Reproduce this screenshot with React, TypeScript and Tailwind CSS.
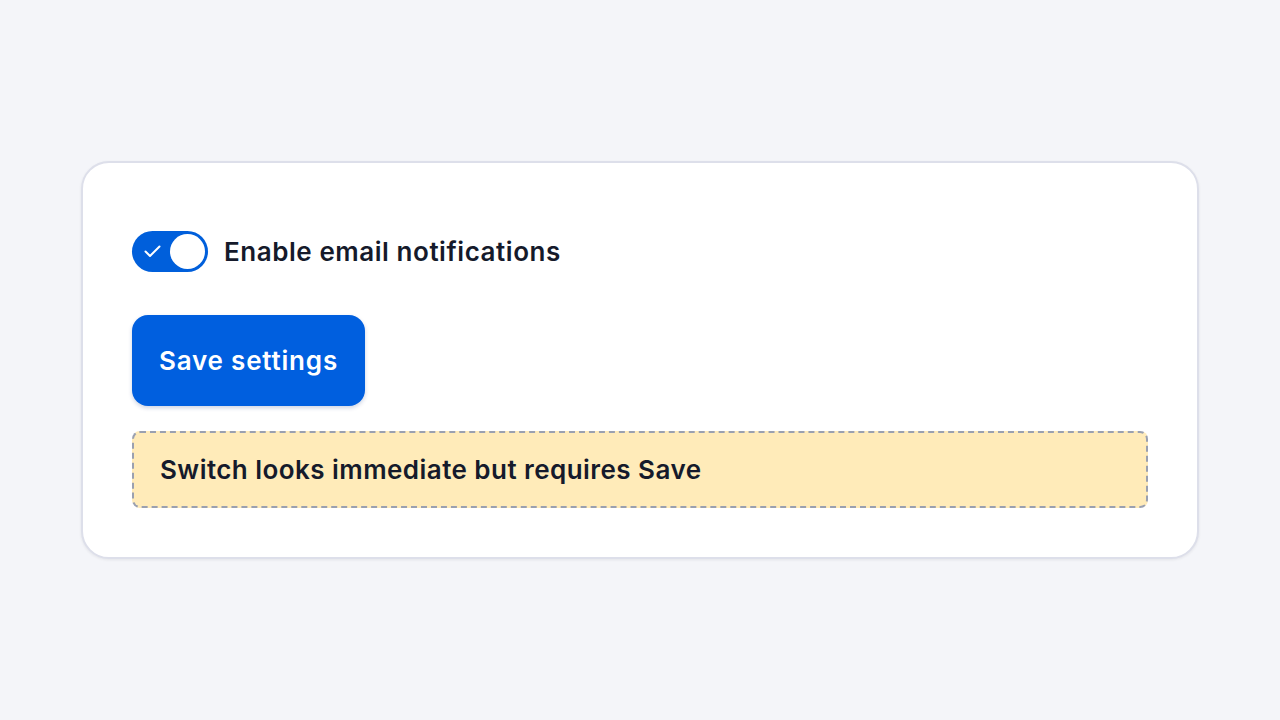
import { useState } from 'react';

function App() {
  const [enabled, setEnabled] = useState(true);

  return (
    <div className="min-h-screen bg-[#f4f5f9] flex items-center justify-center font-['Inter',sans-serif] text-[#151a2b]">
      <div className="w-[1118px] bg-white border-2 border-[#dddfea] rounded-[28px] px-[49px] pt-[68px] pb-[49px] shadow-[0_1px_3px_rgba(20,24,40,0.08)]">
        {/* Toggle row */}
        <label className="flex items-center gap-4 h-[41px] cursor-pointer">
          <button
            type="button"
            role="switch"
            aria-checked={enabled}
            onClick={() => setEnabled(!enabled)}
            className={`relative w-[76px] h-[41px] shrink-0 rounded-full flex items-center px-[3px] ${
              enabled ? 'bg-[#005fdb] justify-end' : 'bg-[#c5c9d6] justify-start'
            }`}
          >
            {enabled && (
              <svg
                className="absolute left-[12px] top-[14px]"
                width="17"
                height="13"
                viewBox="0 0 17 13"
                fill="none"
                stroke="white"
                strokeWidth="2"
                strokeLinecap="round"
                strokeLinejoin="round"
              >
                <path d="M1.5 6.5L6 11L15.5 1.5" />
              </svg>
            )}
            <span className="block w-[35px] h-[35px] rounded-full bg-white" />
          </button>
          <span className="text-[26px] leading-none font-semibold tracking-[0.55px]">Enable email notifications</span>
        </label>

        {/* Save */}
        <button
          type="button"
          className="block mt-[43px] h-[91px] px-[27px] rounded-[16px] bg-[#005fdf] text-white text-[26px] leading-none font-semibold tracking-[0.8px] shadow-[0_2px_4px_rgba(0,40,120,0.2)]"
        >
          Save settings
        </button>

        {/* Note */}
        <div className="mt-[25px] h-[77px] flex items-center px-[26px] bg-[#ffebb9] border-2 border-dashed border-[#9aa0b0] rounded-[8px]">
          <span className="text-[26px] leading-none font-semibold tracking-[0.45px]">Switch looks immediate but requires Save</span>
        </div>
      </div>
    </div>
  );
}

export default App;
